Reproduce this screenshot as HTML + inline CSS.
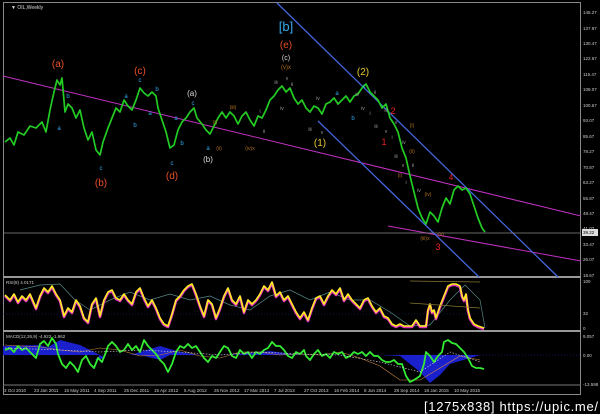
<!DOCTYPE html>
<html><head><meta charset="utf-8"><style>
html,body{margin:0;padding:0;background:#000;width:600px;height:414px;overflow:hidden}
svg{display:block}
text{font-family:"Liberation Sans",sans-serif}
</style></head><body>
<svg width="600" height="414" viewBox="0 0 600 414" xmlns="http://www.w3.org/2000/svg">
<rect width="600" height="414" fill="#000"/>
<rect x="3.5" y="2.5" width="577" height="392" fill="none" stroke="#888" stroke-width="1"/>
<line x1="3" y1="277" x2="581" y2="277" stroke="#999" stroke-width="2"/>
<line x1="3" y1="331" x2="581" y2="331" stroke="#999" stroke-width="2"/>
<line x1="3" y1="385" x2="581" y2="385" stroke="#777" stroke-width="1"/>
<text x="11" y="9" fill="#ddd" font-size="5">▼ OIL,Weekly</text>

<line x1="3" y1="76" x2="581" y2="216" stroke="#c030c0" stroke-width="1"/>
<line x1="388" y1="226" x2="581" y2="261" stroke="#c030c0" stroke-width="1"/>
<line x1="277" y1="3" x2="558" y2="277" stroke="#4466dd" stroke-width="1.3"/>
<line x1="318" y1="121" x2="479" y2="277" stroke="#4466dd" stroke-width="1.3"/>
<line x1="3" y1="233" x2="581" y2="233" stroke="#888" stroke-width="0.8"/>

<polyline fill="none" stroke="#22cc22" stroke-width="1.7" stroke-linejoin="round" points="5,142 10,138 14,145 18,132 24,135 30,126 36,128 42,122 46,132 50,110 54,92 57,80 60,85 62,78 65,112 68,104 72,108 76,118 80,110 84,128 88,140 92,132 96,150 100,155 103,142 108,128 112,118 116,108 120,112 124,100 128,106 132,110 136,100 140,88 144,93 148,96 152,92 156,96 158,108 162,120 166,132 170,148 174,145 178,130 182,122 186,118 190,112 194,108 197,118 202,124 206,130 210,134 214,126 218,118 222,112 226,118 230,112 234,116 238,124 242,116 246,112 250,120 254,126 258,116 262,118 266,110 270,100 274,96 278,90 282,86 286,92 290,88 294,98 298,104 302,100 306,108 310,112 314,106 318,108 322,114 326,104 330,102 334,98 338,104 342,100 346,96 350,102 354,96 358,94 362,88 366,84 370,92 374,96 378,100 382,108 386,104 390,118 394,124 398,132 402,148 406,158 410,176 414,192 418,208 422,218 426,224 430,212 434,216 438,222 442,208 446,198 450,204 454,190 458,186 462,190 466,188 470,194 474,206 478,218 482,228 485,232"/>

<g font-size="9" text-anchor="middle">
<text x="286" y="31" fill="#33aaee" font-size="13">[b]</text>
<text x="286" y="48" fill="#e8502a" font-size="10">(e)</text>
<text x="286" y="60" fill="#ddd" font-size="7">(c)</text>
<text x="286" y="69" fill="#b07020" font-size="6">(v)x</text>
<text x="58" y="67" fill="#e8502a" font-size="10">(a)</text>
<text x="101" y="186" fill="#e8502a" font-size="10">(b)</text>
<text x="140" y="74" fill="#e8502a" font-size="10">(c)</text>
<text x="172" y="179" fill="#e8502a" font-size="10">(d)</text>
<text x="192" y="96" fill="#ddd" font-size="8">(a)</text>
<text x="208" y="162" fill="#ddd" font-size="8">(b)</text>
<text x="363" y="75" fill="#e8c830" font-size="10">(2)</text>
<text x="320" y="146" fill="#e8c830" font-size="10">(1)</text>
<text x="393" y="114" fill="#ee2222" font-size="9">2</text>
<text x="384" y="145" fill="#ee2222" font-size="9">1</text>
<text x="451" y="180" fill="#ee2222" font-size="8">4</text>
<text x="438" y="250" fill="#ee2222" font-size="9">3</text>
</g>
<g font-size="6" fill="#33aaee" text-anchor="middle">
<text x="59" y="130">a</text><text x="68" y="98">b</text><text x="101" y="170">c</text>
<text x="126" y="98">a</text><text x="135" y="127">b</text><text x="140" y="82">c</text>
<text x="150" y="115">a</text><text x="157" y="91">b</text><text x="172" y="165">c</text>
<text x="176" y="120">a</text><text x="182" y="145">b</text><text x="193" y="105">c</text>
<text x="208" y="150">a</text><text x="337" y="95">a</text><text x="353" y="120">b</text><text x="364" y="88">c</text>
</g>
<g font-size="5" fill="#b07020" text-anchor="middle">
<text x="215" y="124">(i)</text><text x="219" y="150">(ii)</text><text x="233" y="109">(iii)</text>
<text x="250" y="150">(iv)x</text><text x="412" y="127">(i)</text><text x="412" y="153">(ii)</text>
<text x="400" y="177">(i)</text><text x="428" y="196">(iv)</text><text x="425" y="240">(iii)x</text><text x="441" y="236">(v)</text>
</g>
<g font-size="5" fill="#999" text-anchor="middle">
<text x="276" y="84">iii</text><text x="287" y="80">v</text><text x="292" y="86">ii</text><text x="282" y="110">iv</text>
<text x="264" y="133">ii</text><text x="260" y="113">i</text><text x="318" y="100">iv</text><text x="310" y="131">iii</text>
<text x="322" y="134">v</text><text x="357" y="96">iii</text><text x="375" y="94">ii</text><text x="363" y="110">iv</text>
<text x="370" y="115">i</text><text x="376" y="128">iii</text><text x="386" y="133">v</text><text x="392" y="139">i</text>
<text x="386" y="112">iii</text><text x="396" y="124">v</text><text x="404" y="144">iv</text><text x="396" y="158">iii</text>
<text x="403" y="167">v</text><text x="413" y="167">ii</text><text x="406" y="184">i</text><text x="419" y="192">iv</text>
</g>

<g font-size="4.5" fill="#ccc">
<text x="583" y="14">145.27</text><text x="583" y="30">137.87</text><text x="583" y="45">130.47</text>
<text x="583" y="60">122.67</text><text x="583" y="76">115.47</text><text x="583" y="91">108.07</text>
<text x="583" y="107">100.67</text><text x="583" y="122">93.07</text><text x="583" y="138">85.67</text>
<text x="583" y="153">78.27</text><text x="583" y="169">70.87</text><text x="583" y="184">63.27</text>
<text x="583" y="200">55.87</text><text x="583" y="215">48.47</text><text x="583" y="230">41.07</text>
<text x="583" y="246">33.47</text><text x="583" y="261">26.07</text><text x="583" y="277">18.67</text>
<text x="583" y="283">100</text><text x="583" y="315">32</text><text x="583" y="330">0</text>
<text x="583" y="338">9.057</text><text x="583" y="357">0.00</text><text x="583" y="386">-13.598</text>
</g>
<rect x="582" y="229" width="16" height="7" fill="#ddd"/>
<text x="583" y="234" font-size="4.5" fill="#000">39.22</text>

<text x="6" y="284" font-size="4.5" fill="#ccc">RSI(8) 4.0171</text>
<line x1="3" y1="314" x2="480" y2="314" stroke="#223388" stroke-dasharray="1,2" stroke-width="0.6"/>
<polyline fill="none" stroke="#558888" stroke-width="0.7" points="20,290 40,285 60,284 75,300 90,310 110,300 130,292 150,300 170,294 190,300 210,296 230,305 250,310 270,296 290,290 310,300 330,292 350,300 370,300 390,312 410,326 430,325 450,300 465,285 480,300 485,328"/>
<polyline fill="none" stroke="#e030c0" stroke-width="2.6" stroke-linejoin="round" transform="translate(0,1)" points="5,295 10,300 14,294 18,302 22,296 26,300 30,294 36,308 40,296 44,288 48,292 52,286 56,294 60,300 64,316 68,308 72,312 76,300 80,306 84,318 88,322 92,304 96,298 100,316 104,300 108,292 112,290 116,298 120,300 124,294 128,300 132,304 136,292 140,288 144,298 148,306 152,300 156,308 160,318 164,324 168,326 172,314 176,300 180,296 184,290 188,286 192,284 196,294 200,306 204,316 208,300 212,304 216,318 220,308 224,296 228,288 232,300 236,304 240,296 244,312 248,300 252,304 256,300 260,294 264,286 268,290 272,282 276,296 280,292 284,300 288,296 292,304 296,312 300,318 304,312 308,320 312,308 316,298 320,296 324,304 328,296 332,290 336,294 340,288 344,300 348,294 352,300 356,304 360,308 364,300 368,298 372,306 376,312 380,308 384,316 388,318 392,324 396,326 400,324 404,326 408,326 412,326 416,320 420,326 426,326 428,310 430,304 432,312 434,310 436,318 440,306 444,296 448,286 452,284 456,284 460,286 462,296 464,300 466,294 468,310 470,318 474,324 478,326 484,328"/>
<polyline fill="none" stroke="#ffee22" stroke-width="1.6" stroke-linejoin="round" points="5,295 10,300 14,294 18,302 22,296 26,300 30,294 36,308 40,296 44,288 48,292 52,286 56,294 60,300 64,316 68,308 72,312 76,300 80,306 84,318 88,322 92,304 96,298 100,316 104,300 108,292 112,290 116,298 120,300 124,294 128,300 132,304 136,292 140,288 144,298 148,306 152,300 156,308 160,318 164,324 168,326 172,314 176,300 180,296 184,290 188,286 192,284 196,294 200,306 204,316 208,300 212,304 216,318 220,308 224,296 228,288 232,300 236,304 240,296 244,312 248,300 252,304 256,300 260,294 264,286 268,290 272,282 276,296 280,292 284,300 288,296 292,304 296,312 300,318 304,312 308,320 312,308 316,298 320,296 324,304 328,296 332,290 336,294 340,288 344,300 348,294 352,300 356,304 360,308 364,300 368,298 372,306 376,312 380,308 384,316 388,318 392,324 396,326 400,324 404,326 408,326 412,326 416,320 420,326 426,326 428,310 430,304 432,312 434,310 436,318 440,306 444,296 448,286 452,284 456,284 460,286 462,296 464,300 466,294 468,310 470,318 474,324 478,326 484,328"/>
<line x1="410" y1="281" x2="480" y2="282" stroke="#887733" stroke-width="0.7"/>
<line x1="410" y1="303" x2="480" y2="308" stroke="#887733" stroke-width="0.7"/>

<text x="6" y="338" font-size="4.5" fill="#ccc">MACD(12,26,9) -4.922 -1.962</text>
<line x1="3" y1="355" x2="580" y2="355" stroke="#2233aa" stroke-dasharray="1,2" stroke-width="0.6"/>
<path d="M3,346 L40,345 L50,348 L60,355 L3,355 Z M40,352 L60,340 L80,345 L100,355 L40,355Z M100,355 L95,360 L105,358Z M130,355 L160,346 L180,352 L200,355Z M230,355 L270,351 L300,355Z M380,355 L400,356 L420,372 L430,383 L440,375 L450,364 L470,358 L480,355 Z M140,355 L160,360 L170,355Z" fill="#1a20cc"/>
<polyline fill="none" stroke="#cc8844" stroke-width="0.6" points="5,345 40,347 60,350 80,352 100,348 120,350 140,356 160,355 180,350 200,356 220,358 240,352 260,352 280,355 300,354 320,355 340,352 360,358 380,366 400,380 420,380 440,368 460,356 480,360"/>
<polyline fill="none" stroke="#33ee33" stroke-width="1.8" stroke-linejoin="round" points="5,350 10,348 14,352 18,346 22,350 26,348 30,352 36,358 40,344 44,341 48,346 52,338 56,344 58,354 62,364 66,368 70,362 74,366 78,372 82,360 86,356 90,364 94,368 98,358 102,362 106,352 108,346 112,342 116,346 120,352 124,350 128,344 132,350 136,346 140,352 144,340 148,346 152,350 156,354 160,360 164,364 168,372 172,364 176,352 180,346 184,348 188,344 192,348 196,346 200,352 204,358 208,362 212,356 216,358 220,352 224,346 228,348 232,356 236,358 240,350 244,354 248,352 252,358 256,352 260,354 264,350 268,348 272,342 276,346 280,346 284,350 288,356 292,358 296,352 300,354 304,350 306,356 310,360 314,354 318,350 322,356 326,354 330,358 334,352 338,354 342,352 346,358 350,356 354,352 358,354 362,352 366,356 370,352 374,356 378,356 382,360 386,362 390,362 394,360 398,364 402,364 406,376 410,382 414,380 420,376 424,364 426,352 430,356 434,362 438,356 442,352 444,342 448,340 452,343 456,344 460,348 464,352 468,358 472,366 476,368 480,368 484,369"/>
<polyline fill="none" stroke="#dddddd" stroke-width="0.6" stroke-dasharray="1.5,1.5" points="5,348 60,350 100,352 140,350 180,352 220,355 260,352 300,354 340,355 380,362 420,372 450,352 480,362"/>

<g font-size="4.5" fill="#ccc">
<text x="4" y="392">3 Oct 2010</text><text x="34" y="392">23 Jan 2011</text><text x="64" y="392">15 May 2011</text>
<text x="94" y="392">4 Sep 2011</text><text x="124" y="392">25 Dec 2011</text><text x="154" y="392">15 Apr 2012</text>
<text x="184" y="392">5 Aug 2012</text><text x="214" y="392">25 Nov 2012</text><text x="244" y="392">17 Mar 2013</text>
<text x="274" y="392">7 Jul 2013</text><text x="304" y="392">27 Oct 2013</text><text x="334" y="392">16 Feb 2014</text>
<text x="364" y="392">8 Jun 2014</text><text x="394" y="392">28 Sep 2014</text><text x="424" y="392">18 Jan 2015</text>
<text x="454" y="392">10 May 2015</text>
</g>
<text x="598" y="411" font-size="13" fill="#fff" text-anchor="end" font-family="Liberation Mono,monospace" textLength="174">[1275x838] https://upic.me/</text>
</svg>
</body></html>
